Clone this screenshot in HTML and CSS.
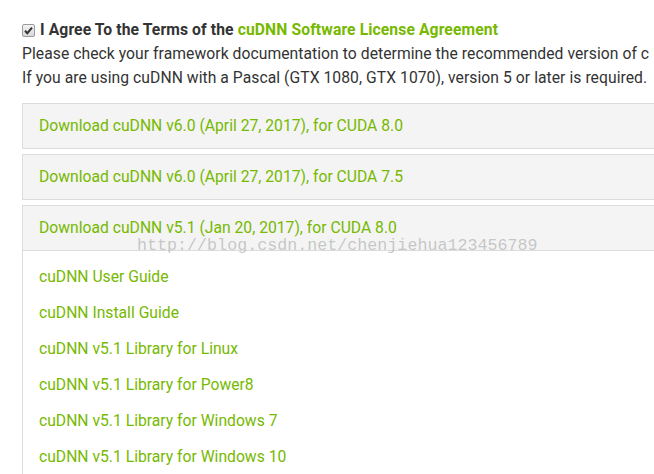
FILE: index.html
```html
<!DOCTYPE html>
<html>
<head>
<meta charset="utf-8">
<link rel="stylesheet" href="styles.css">
</head>
<body>
<div class="page">
  <div class="agree">
    <span class="check"><svg width="13" height="13" viewBox="0 0 13 13"><defs><linearGradient id="g" x1="0" y1="0" x2="0" y2="1"><stop offset="0" stop-color="#f4f4f4"/><stop offset="1" stop-color="#d8d8d8"/></linearGradient></defs><rect x="0.5" y="0.5" width="12" height="12" rx="1.5" fill="url(#g)" stroke="#9a9a9a"/><path d="M3 6.8 L5.3 9.2 L10 3.6" fill="none" stroke="#333" stroke-width="2"/></svg></span>
    <strong class="dark">I Agree To the Terms of the <span class="green">cuDNN Software License Agreement</span></strong>
  </div>
  <p class="text">Please check your framework documentation to determine the recommended version of c</p>
  <p class="text">If you are using cuDNN with a Pascal (GTX 1080, GTX 1070), version 5 or later is required.</p>

  <div class="panels">
    <div class="panel"><div class="panel-head">Download cuDNN v6.0 (April 27, 2017), for CUDA 8.0</div></div>
    <div class="panel"><div class="panel-head">Download cuDNN v6.0 (April 27, 2017), for CUDA 7.5</div></div>
    <div class="panel open">
      <div class="panel-head">Download cuDNN v5.1 (Jan 20, 2017), for CUDA 8.0</div>
      <div class="panel-body">
        <a class="link">cuDNN User Guide</a>
        <a class="link">cuDNN Install Guide</a>
        <a class="link">cuDNN v5.1 Library for Linux</a>
        <a class="link">cuDNN v5.1 Library for Power8</a>
        <a class="link">cuDNN v5.1 Library for Windows 7</a>
        <a class="link">cuDNN v5.1 Library for Windows 10</a>
      </div>
    </div>
  </div>
  <div class="watermark">http://blog.csdn.net/chenjiehua123456789</div>
</div>
</body>
</html>
```
FILE: styles.css
```css
html, body {
  margin: 0;
  padding: 0;
  background: #fff;
  overflow: hidden;
  width: 654px;
  height: 474px;
}
.page {
  position: relative;
  width: 680px;
  padding: 18px 0 0 22px;
  font-family: Roboto, "Liberation Sans", sans-serif;
  font-size: 15.7px;
  color: #333;
  white-space: nowrap;
}
.agree {
  display: flex;
  align-items: center;
  gap: 5px;
  height: 24px;
  line-height: 24px;
}
.check {
  display: flex;
  width: 13px;
  height: 13px;
}
.dark {
  color: #333;
  font-weight: 700;
  letter-spacing: 0.1px;
}
.green {
  color: #76b900;
}
.text {
  margin: 0;
  line-height: 24px;
  color: #333;
  letter-spacing: 0.05px;
}
.panels {
  margin-top: 13px;
  display: flex;
  flex-direction: column;
  gap: 5px;
}
.panel {
  border: 1px solid #dcdcdc;
  background: #fff;
}
.open {
  border-right: none;
  border-bottom: none;
}
.panel-head {
  height: 44px;
  line-height: 43px;
  padding-left: 16px;
  background: #f4f4f4;
  color: #76b900;
}
.open .panel-head {
  border-bottom: 1px solid #dcdcdc;
}
.panel-body {
  display: flex;
  flex-direction: column;
  padding: 8px 0 30px 16px;
}
.link {
  line-height: 36px;
  color: #76b900;
}
.watermark {
  position: absolute;
  left: 137px;
  top: 236px;
  font-family: "Liberation Mono", monospace;
  font-size: 16.7px;
  color: rgba(140, 140, 140, 0.45);
  pointer-events: none;
}
```
